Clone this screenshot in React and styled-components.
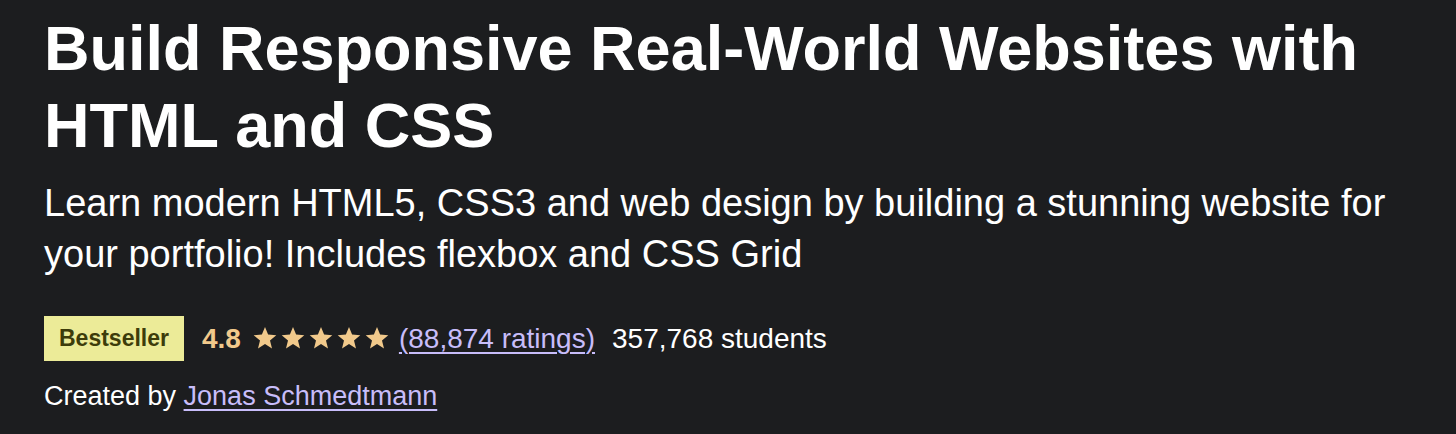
import React from 'react';
import styled, { createGlobalStyle } from 'styled-components';

const GlobalStyle = createGlobalStyle`
  html, body {
    margin: 0;
    padding: 0;
    background: #1c1d1f;
  }
  body {
    font-family: "Liberation Sans", Arial, sans-serif;
    color: #ffffff;
  }
`;

const Header = styled.header`
  padding: 10px 44px 0;
  display: flex;
  flex-direction: column;
`;

const Title = styled.h1`
  margin: 0;
  font-size: 63px;
  line-height: 77px;
  font-weight: 700;
  color: #ffffff;
`;

const Subtitle = styled.p`
  margin: 14px 0 0;
  font-size: 38px;
  line-height: 51px;
  color: #ffffff;
`;

const Meta = styled.div`
  margin-top: 36px;
  display: flex;
  align-items: center;
  gap: 18px;
  font-size: 28px;
`;

const Badge = styled.span`
  display: inline-flex;
  align-items: center;
  justify-content: center;
  height: 45px;
  padding: 0 15px;
  background: #eceb98;
  color: #3d3c0a;
  font-size: 23px;
  font-weight: 700;
`;

const Rating = styled.span`
  display: inline-flex;
  align-items: center;
  gap: 12px;
  color: #f1c98b;
  font-weight: 700;
`;

const Stars = styled.span`
  display: inline-flex;
  gap: 4px;
`;

const Link = styled.a`
  color: #c8bdfa;
  text-decoration: underline;
  text-underline-offset: 4px;
  text-decoration-thickness: 2px;
  cursor: pointer;
`;

const RatingsLink = styled(Link)`
  margin-left: -8px;
`;

const Students = styled.span`
  margin-left: -1px;
`;

const Creator = styled.p`
  margin: 17px 0 0;
  font-size: 27px;
  line-height: 36px;
`;

function Star() {
  return (
    <svg width="24" height="23" viewBox="0 0 24 23" fill="#f1c98b">
      <path d="M12 0l3.1 7.6 8.2.6-6.3 5.3 2 8-7-4.4-7 4.4 2-8L.7 8.2l8.2-.6z" />
    </svg>
  );
}

export default function App() {
  return (
    <>
      <GlobalStyle />
      <Header>
        <Title>
          Build Responsive Real-World Websites with
          <br />
          HTML and CSS
        </Title>
        <Subtitle>
          Learn modern HTML5, CSS3 and web design by building a stunning website for
          <br />
          your portfolio! Includes flexbox and CSS Grid
        </Subtitle>
        <Meta>
          <Badge>Bestseller</Badge>
          <Rating>
            4.8
            <Stars>
              {[0, 1, 2, 3, 4].map((i) => (
                <Star key={i} />
              ))}
            </Stars>
          </Rating>
          <RatingsLink>(88,874 ratings)</RatingsLink>
          <Students>357,768 students</Students>
        </Meta>
        <Creator>
          Created by <Link>Jonas Schmedtmann</Link>
        </Creator>
      </Header>
    </>
  );
}
